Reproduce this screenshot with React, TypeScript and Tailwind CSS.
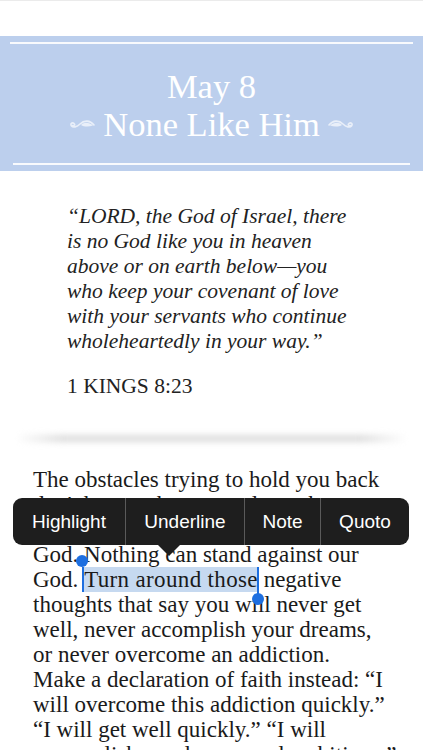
import React from 'react'

const serif = { fontFamily: '"Liberation Serif", "Times New Roman", serif' }
const sans = { fontFamily: '"Liberation Sans", Arial, sans-serif' }

function Swash({ flip }: { flip?: boolean }) {
  return (
    <svg
      width="26"
      height="12"
      viewBox="0 0 26 12"
      className={flip ? 'scale-x-[-1]' : ''}
      fill="none"
    >
      <path
        d="M25 7 C 21 2, 15 2, 11 6 C 8 9, 4 10, 2.5 8 C 1 6, 3 4, 5 5.5 C 6.5 6.8, 5 8.5, 3.5 7.5"
        stroke="#e9eff9"
        strokeWidth="1.6"
        strokeLinecap="round"
      />
      <path d="M24 7.5 C 20 4, 15 4, 12 7 C 15 9, 20 9, 24 7.5 Z" fill="#e9eff9" />
    </svg>
  )
}

const verse = [
  '\u201CLORD, the God of Israel, there',
  'is no God like you in heaven',
  'above or on earth below\u2014you',
  'who keep your covenant of love',
  'with your servants who continue',
  'wholeheartedly in your way.\u201D',
]

const menuItems = [
  { label: 'Highlight', w: 'w-[112px]' },
  { label: 'Underline', w: 'w-[119px]' },
  { label: 'Note', w: 'w-[76px]' },
  { label: 'Quoto', w: 'flex-1' },
]

export default function App() {
  return (
    <div className="w-[423px] h-[750px] overflow-hidden bg-white text-[#1c1c1c]" style={serif}>
      {/* top strip */}
      <div className="h-[36px] border-t border-[#ebebeb]" />

      {/* date banner */}
      <div className="bg-[#bccfed] h-[135px] pt-[6px] flex flex-col">
        <div className="mx-[10px] h-[2px] bg-white/90" />
        <div className="flex-1 flex flex-col items-center justify-center text-white pt-[3px]">
          <div className="text-[34.5px] leading-[38px]">May 8</div>
          <div className="flex items-center gap-[8px] text-[34.5px] leading-[38px]">
            <Swash />
            <span>None Like Him</span>
            <Swash flip />
          </div>
        </div>
        <div className="mx-[13px] h-[2px] bg-white/90 mb-[6px]" />
      </div>

      {/* scripture */}
      <div className="pt-[33px] pl-[67px] italic text-[21.5px] leading-[25px] text-[#222]">
        {verse.map((l) => (
          <div key={l}>{l}</div>
        ))}
      </div>
      <div className="pl-[67px] mt-[20px] text-[21.5px] leading-[25px] text-[#222]">1 KINGS 8:23</div>

      {/* divider shadow */}
      <div className="mt-[36px] mx-[16px] h-[7px] rounded-full bg-[linear-gradient(to_right,transparent,#dcdcdc_12%,#dcdcdc_88%,transparent)] blur-[3px]" />

      {/* body */}
      <div className="relative mt-[25px] pl-[33px] text-[23px] leading-[25px] text-[#1a1a1a]">
        <div>The obstacles trying to hold you back</div>
        <div>don&apos;t have to keep you down, because</div>
        <div>no problem is too big for our great</div>
        <div>God. Nothing can stand against our</div>
        <div>
          God.{' '}
          <span className="relative bg-[#c6d9f0] tracking-[0.35px]">
            Turn around those
            <span className="absolute left-[-2px] top-[0px] h-[25px] w-[2px] bg-[#1d6fe0]" />
            <span className="absolute left-[-8px] top-[-12px] h-[12px] w-[12px] rounded-full bg-[#1d6fe0]" />
            <span className="absolute right-[-1px] top-[0px] h-[30px] w-[2px] bg-[#1d6fe0]" />
            <span className="absolute right-[-6px] top-[26px] h-[12px] w-[12px] rounded-full bg-[#1d6fe0]" />
          </span>{' '}
          negative
        </div>
        <div>thoughts that say you will never get</div>
        <div>well, never accomplish your dreams,</div>
        <div>or never overcome an addiction.</div>
        <div>Make a declaration of faith instead: &ldquo;I</div>
        <div>will overcome this addiction quickly.&rdquo;</div>
        <div>&ldquo;I will get well quickly.&rdquo; &ldquo;I will</div>
        <div>accomplish my dreams and ambitions.&rdquo;</div>

        {/* edit menu */}
        <div className="absolute left-[13px] top-[31px] w-[396px]" style={sans}>
          <div className="flex h-[47px] items-stretch rounded-[9px] bg-[#1e1e1e] text-white text-[19px]">
            {menuItems.map((m, i) => (
              <div
                key={m.label}
                className={`flex items-center justify-center ${m.w} ${i > 0 ? 'border-l border-[#5a5a5a]' : ''}`}
              >
                {m.label}
              </div>
            ))}
          </div>
          <div className="ml-[145px] h-0 w-0 border-x-[11px] border-t-[11px] border-x-transparent border-t-[#1e1e1e]" />
        </div>
      </div>
    </div>
  )
}
